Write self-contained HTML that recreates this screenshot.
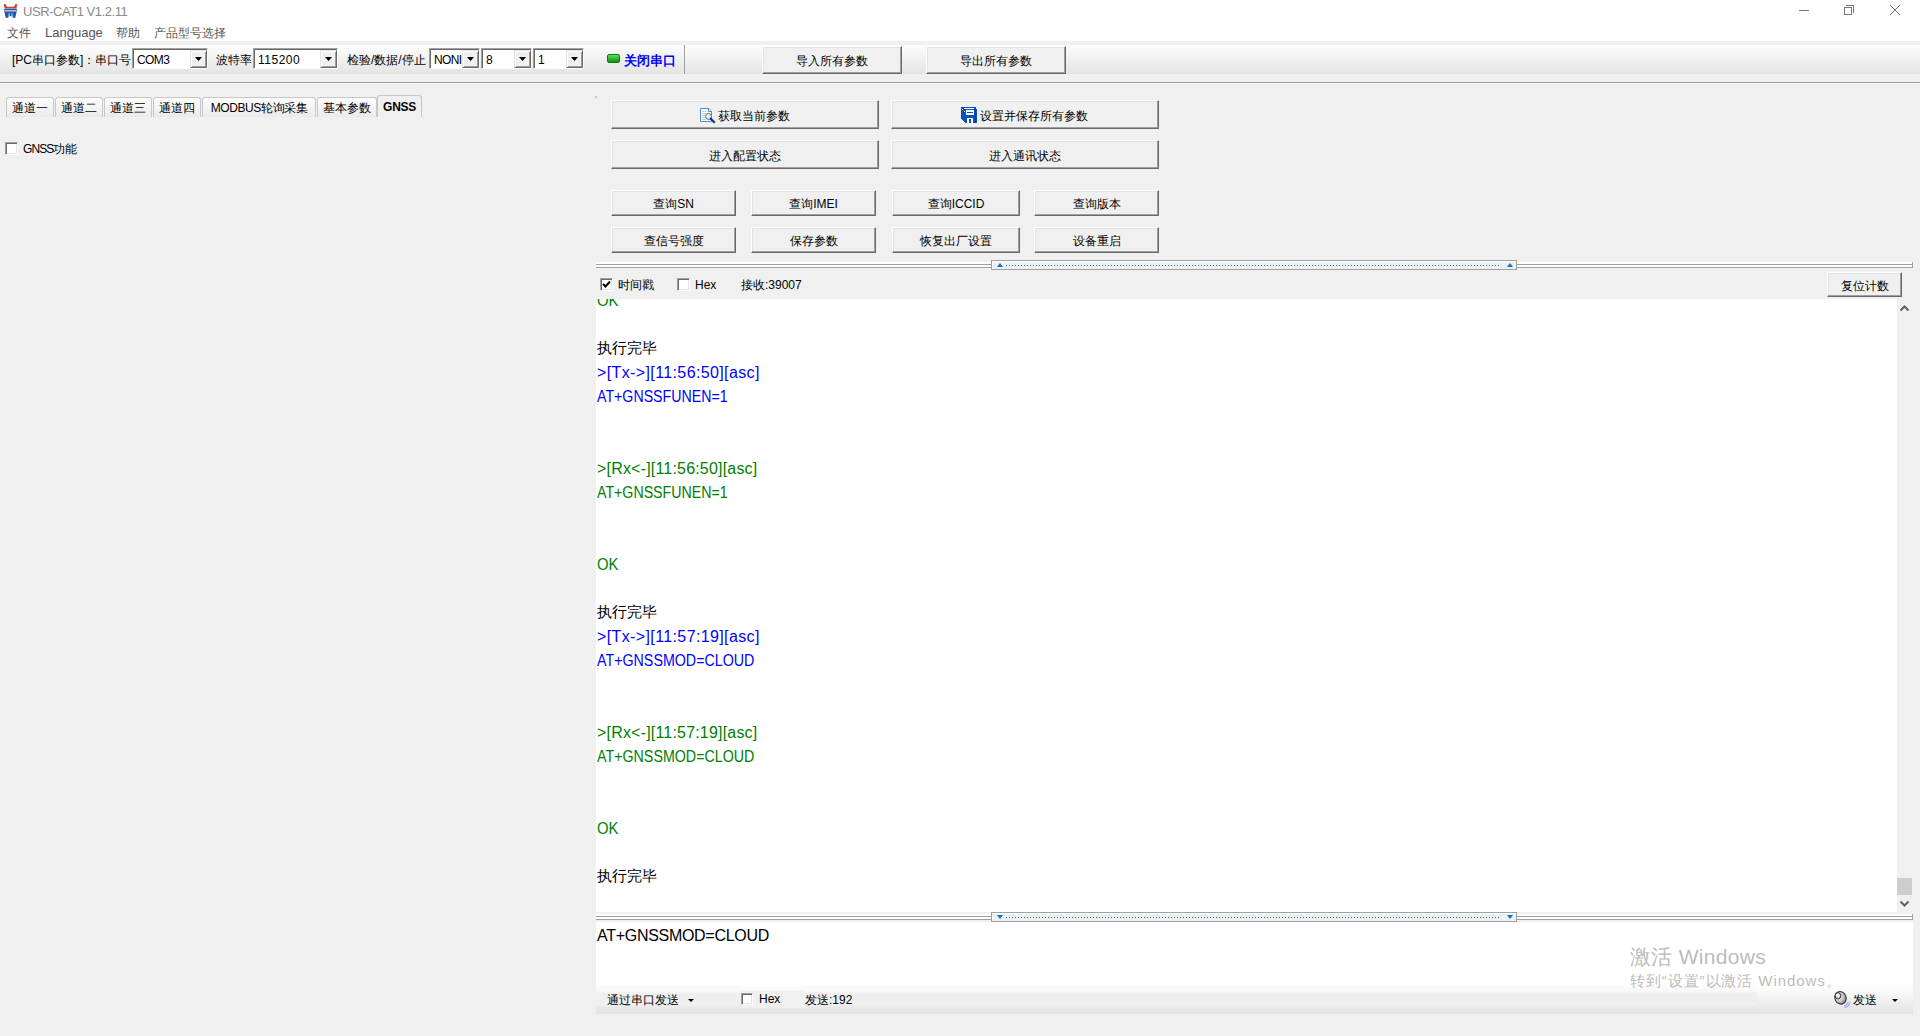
<!DOCTYPE html>
<html><head><meta charset="utf-8">
<style>
*{margin:0;padding:0;box-sizing:border-box}
html,body{width:1920px;height:1036px;overflow:hidden;background:#f0f0f0;font-family:"Liberation Sans",sans-serif;font-size:12px;color:#000}
.a{position:absolute}
.t{position:absolute;white-space:pre;line-height:14px;font-size:12px}
.btn{position:absolute;background:#f0f0f0;border-top:1px solid #fff;border-left:1px solid #fff;border-right:1px solid #696969;border-bottom:1px solid #696969;box-shadow:inset -1px -1px 0 #a0a0a0, inset 1px 1px 0 #e3e3e3}
.btn span{position:absolute;left:0;right:0;text-align:center;white-space:pre;line-height:14px}
.chk{position:absolute;width:13px;height:13px;background:#fff;border-top:1px solid #a0a0a0;border-left:1px solid #a0a0a0;border-right:1px solid #fff;border-bottom:1px solid #fff;box-shadow:inset 1px 1px 0 #696969, inset -1px -1px 0 #e3e3e3}
.combo{position:absolute;background:#fff;border-top:1px solid #a0a0a0;border-left:1px solid #a0a0a0;border-right:1px solid #fff;border-bottom:1px solid #fff;box-shadow:inset 1px 1px 0 #696969}
.combo .v{position:absolute;left:4px;top:4px;white-space:pre;line-height:14px;color:#000;letter-spacing:-0.6px}
.combo .dd{position:absolute;right:0;top:1px;bottom:0;width:17px;background:#f0f0f0;border-top:1px solid #e3e3e3;border-left:1px solid #e3e3e3;border-right:1px solid #696969;border-bottom:1px solid #696969;box-shadow:inset 1px 1px 0 #fff, inset -1px -1px 0 #a0a0a0}
.combo .dd:after{content:"";position:absolute;left:4px;top:6px;width:7px;height:4px;background:#000;clip-path:polygon(0 0,100% 0,50% 100%)}
.tab{position:absolute;top:97px;height:20px;border:1px solid #c8c8c8;border-bottom:none;border-radius:3px 3px 0 0;background:linear-gradient(#fdfdfd,#eaeaea)}
.tab span{position:absolute;left:0;right:0;top:3px;text-align:center;white-space:pre;line-height:14px}
.log{position:absolute;left:597px;white-space:pre;font-size:15px;line-height:24px}
.lat{font-size:16px}
.tx{color:#0000ff}.rx{color:#008000}
</style></head><body>

<!-- title bar -->
<div class="a" style="left:0;top:0;width:1920px;height:41px;background:#fff"></div>
<svg class="a" style="left:3px;top:3px" width="15" height="16" viewBox="0 0 15 16">
  <path d="M0.9 0.9 L2.7 0.9 Q2.9 3.2 4.5 3.7 L10.5 3.7 Q12.1 3.2 12.3 0.9 L14.1 0.9 Q14 4.5 13 5.6 L2 5.6 Q1 4.5 0.9 0.9 Z" fill="#d8402a"/>
  <path d="M1 5.7 L14 5.7 L13.6 9 L12.3 14.8 L9.6 14.8 L9.2 10 L8.7 10 L8.5 13.2 L6.5 13.2 L6.3 10 L5.8 10 L5.4 14.8 L2.7 14.8 L1.4 9 Z" fill="#2257b2"/>
  <rect x="1.6" y="7.2" width="11.8" height="1.3" fill="#c9d6ee"/>
</svg>
<div class="t" style="left:23px;top:4px;font-size:13px;line-height:15px;color:#8a8a8a;letter-spacing:-0.45px">USR-CAT1 V1.2.11</div>
<div class="t" style="left:7px;top:26px;color:#555">文件</div>
<div class="t" style="left:45px;top:26px;color:#555;font-size:13px">Language</div>
<div class="t" style="left:116px;top:26px;color:#555">帮助</div>
<div class="t" style="left:154px;top:26px;color:#555">产品型号选择</div>
<!-- window controls -->
<div class="a" style="left:1799px;top:10px;width:10px;height:1px;background:#777"></div>
<div class="a" style="left:1844px;top:7px;width:8px;height:8px;border:1px solid #777"></div>
<div class="a" style="left:1846px;top:5px;width:8px;height:8px;border-top:1px solid #777;border-right:1px solid #777"></div>
<svg class="a" style="left:1889px;top:4px" width="12" height="12"><path d="M1 1 L11 11 M11 1 L1 11" stroke="#777" stroke-width="1"/></svg>

<!-- toolbar -->
<div class="a" style="left:0;top:45px;width:1920px;height:29px;background:linear-gradient(#fdfdfd,#e4e4e4)"></div>
<div class="a" style="left:0;top:82px;width:1920px;height:1px;background:#a0a0a0"></div>
<div class="a" style="left:0;top:83px;width:1920px;height:1px;background:#fff"></div>
<div class="a" style="left:684px;top:45px;width:1px;height:29px;background:#a0a0a0"></div>

<div class="t" style="left:12px;top:53px">[PC串口参数]：串口号</div>
<div class="combo" style="left:132px;top:48px;width:76px;height:21px"><span class="v">COM3</span><div class="dd"></div></div>
<div class="t" style="left:216px;top:53px">波特率</div>
<div class="combo" style="left:253px;top:48px;width:85px;height:21px"><span class="v" style="letter-spacing:0.5px">115200</span><div class="dd"></div></div>
<div class="t" style="left:347px;top:53px">检验/数据/停止</div>
<div class="combo" style="left:429px;top:48px;width:51px;height:21px;overflow:hidden"><span class="v">NONI</span><div class="dd"></div></div>
<div class="combo" style="left:481px;top:48px;width:51px;height:21px"><span class="v">8</span><div class="dd"></div></div>
<div class="combo" style="left:533px;top:48px;width:51px;height:21px"><span class="v">1</span><div class="dd"></div></div>
<div class="a" style="left:607px;top:54px;width:13px;height:9px;border-radius:2px;background:linear-gradient(#5fe05f,#109010);border:1px solid #0a7a0a"></div>
<div class="t" style="left:624px;top:53px;color:#0000ff;font-weight:bold;font-size:13px;line-height:15px">关闭串口</div>

<div class="btn" style="left:762px;top:46px;width:140px;height:28px"><span style="top:7px">导入所有参数</span></div>
<div class="btn" style="left:926px;top:46px;width:140px;height:28px"><span style="top:7px">导出所有参数</span></div>

<!-- tabs -->
<div class="tab" style="left:6px;width:48px"><span>通道一</span></div>
<div class="tab" style="left:55px;width:48px"><span>通道二</span></div>
<div class="tab" style="left:104px;width:48px"><span>通道三</span></div>
<div class="tab" style="left:153px;width:48px"><span>通道四</span></div>
<div class="tab" style="left:202px;width:114px"><span style="letter-spacing:-0.4px">MODBUS轮询采集</span></div>
<div class="tab" style="left:317px;width:60px"><span>基本参数</span></div>
<div class="tab" style="left:377px;top:95px;width:45px;height:22px;background:#f0f0f0"><span style="top:4px;font-weight:bold;letter-spacing:-0.3px">GNSS</span></div>

<div class="chk" style="left:5px;top:142px"></div>
<div class="t" style="left:23px;top:142px"><span style="letter-spacing:-0.9px">GNSS</span>功能</div>

<!-- right panel buttons -->
<div class="a" style="left:595px;top:96px;width:2px;height:1px;background:#c4c4c4"></div>
<div class="a" style="left:595px;top:97px;width:1px;height:1px;background:#c8c8c8"></div>
<div class="a" style="left:596px;top:98px;width:2px;height:1px;background:#d6d6d6"></div>
<div class="btn" style="left:611px;top:100px;width:268px;height:29px"><span style="top:8px;padding-left:18px">获取当前参数</span></div>
<div class="btn" style="left:891px;top:100px;width:268px;height:29px"><span style="top:8px;padding-left:18px">设置并保存所有参数</span></div>
<div class="btn" style="left:611px;top:140px;width:268px;height:29px"><span style="top:8px">进入配置状态</span></div>
<div class="btn" style="left:891px;top:140px;width:268px;height:29px"><span style="top:8px">进入通讯状态</span></div>

<div class="btn" style="left:611px;top:190px;width:125px;height:26px"><span style="top:6px">查询SN</span></div>
<div class="btn" style="left:751px;top:190px;width:125px;height:26px"><span style="top:6px">查询IMEI</span></div>
<div class="btn" style="left:892px;top:190px;width:128px;height:26px"><span style="top:6px">查询ICCID</span></div>
<div class="btn" style="left:1034px;top:190px;width:125px;height:26px"><span style="top:6px">查询版本</span></div>
<div class="btn" style="left:611px;top:227px;width:125px;height:26px"><span style="top:6px">查信号强度</span></div>
<div class="btn" style="left:751px;top:227px;width:125px;height:26px"><span style="top:6px">保存参数</span></div>
<div class="btn" style="left:892px;top:227px;width:128px;height:26px"><span style="top:6px">恢复出厂设置</span></div>
<div class="btn" style="left:1034px;top:227px;width:125px;height:26px"><span style="top:6px">设备重启</span></div>

<!-- splitter 1 -->
<div class="a" style="left:596px;top:262px;width:1317px;height:6px;background:#fff;border-top:2px solid #fff"></div>
<div class="a" style="left:596px;top:264px;width:1317px;height:1px;background:#a0a0a0"></div>
<div class="a" style="left:596px;top:267px;width:1317px;height:1px;background:#a0a0a0"></div>
<div class="a" style="left:1912px;top:262px;width:1px;height:6px;background:#a0a0a0"></div>
<div class="a" style="left:991px;top:260px;width:526px;height:10px;background:#f0f0f0;border:1px solid #a0a0a0;box-shadow:inset 1px 1px 0 #fff"></div>
<div class="a" style="left:1006px;top:265px;width:494px;height:1px;background:repeating-linear-gradient(90deg,#0078d7 0 1px,transparent 1px 3px)"></div>
<div class="a" style="left:997px;top:263px;border-left:3px solid transparent;border-right:3px solid transparent;border-bottom:4px solid #0078d7"></div>
<div class="a" style="left:1507px;top:263px;border-left:3px solid transparent;border-right:3px solid transparent;border-bottom:4px solid #0078d7"></div>

<!-- receive bar -->
<div class="chk" style="left:600px;top:278px"></div>
<svg class="a" style="left:602px;top:280px" width="9" height="9"><path d="M1 4 L3.5 6.5 L8 1.5" stroke="#000" stroke-width="2" fill="none"/></svg>
<div class="t" style="left:618px;top:278px">时间戳</div>
<div class="chk" style="left:677px;top:278px"></div>
<div class="t" style="left:695px;top:278px">Hex</div>
<div class="t" style="left:741px;top:278px">接收:39007</div>
<div class="btn" style="left:1827px;top:272px;width:75px;height:25px"><span style="top:6px">复位计数</span></div>

<!-- log area -->
<div class="a" style="left:596px;top:299px;width:1301px;height:613px;background:#fff;overflow:hidden">
</div>
<div class="a" style="left:596px;top:299px;width:1301px;height:613px;overflow:hidden">
<div class="log rx lat" style="left:1px;top:-10px;transform:scaleX(0.93);transform-origin:0 0">OK</div>
<div class="log" style="left:1px;top:37px">执行完毕</div>
<div class="log tx lat" style="left:1px;top:62px;letter-spacing:0.38px">&gt;[Tx-&gt;][11:56:50][asc]</div>
<div class="log tx lat" style="left:1px;top:86px;transform:scaleX(0.887);transform-origin:0 0">AT+GNSSFUNEN=1</div>
<div class="log rx lat" style="left:1px;top:158px;letter-spacing:0.19px">&gt;[Rx&lt;-][11:56:50][asc]</div>
<div class="log rx lat" style="left:1px;top:182px;transform:scaleX(0.887);transform-origin:0 0">AT+GNSSFUNEN=1</div>
<div class="log rx lat" style="left:1px;top:254px;transform:scaleX(0.93);transform-origin:0 0">OK</div>
<div class="log" style="left:1px;top:301px">执行完毕</div>
<div class="log tx lat" style="left:1px;top:326px;letter-spacing:0.38px">&gt;[Tx-&gt;][11:57:19][asc]</div>
<div class="log tx lat" style="left:1px;top:350px;transform:scaleX(0.891);transform-origin:0 0">AT+GNSSMOD=CLOUD</div>
<div class="log rx lat" style="left:1px;top:422px;letter-spacing:0.19px">&gt;[Rx&lt;-][11:57:19][asc]</div>
<div class="log rx lat" style="left:1px;top:446px;transform:scaleX(0.891);transform-origin:0 0">AT+GNSSMOD=CLOUD</div>
<div class="log rx lat" style="left:1px;top:518px;transform:scaleX(0.93);transform-origin:0 0">OK</div>
<div class="log" style="left:1px;top:565px">执行完毕</div>
</div>
<!-- scrollbar -->
<svg class="a" style="left:1899px;top:303px" width="11" height="10"><path d="M1.5 7.5 L5.5 3.5 L9.5 7.5" stroke="#606060" stroke-width="2" fill="none"/></svg>
<div class="a" style="left:1897px;top:878px;width:15px;height:17px;background:#cdcdcd"></div>
<svg class="a" style="left:1899px;top:899px" width="11" height="10"><path d="M1.5 2.5 L5.5 6.5 L9.5 2.5" stroke="#606060" stroke-width="2" fill="none"/></svg>

<!-- splitter 2 -->
<div class="a" style="left:596px;top:914px;width:1317px;height:6px;background:#fff"></div>
<div class="a" style="left:596px;top:916px;width:1317px;height:1px;background:#a0a0a0"></div>
<div class="a" style="left:596px;top:919px;width:1317px;height:1px;background:#a0a0a0"></div>
<div class="a" style="left:1912px;top:914px;width:1px;height:6px;background:#a0a0a0"></div>
<div class="a" style="left:991px;top:912px;width:526px;height:10px;background:#f0f0f0;border:1px solid #a0a0a0;box-shadow:inset 1px 1px 0 #fff"></div>
<div class="a" style="left:1006px;top:917px;width:494px;height:1px;background:repeating-linear-gradient(90deg,#0078d7 0 1px,transparent 1px 3px)"></div>
<div class="a" style="left:997px;top:915px;border-left:3px solid transparent;border-right:3px solid transparent;border-top:4px solid #0078d7"></div>
<div class="a" style="left:1507px;top:915px;border-left:3px solid transparent;border-right:3px solid transparent;border-top:4px solid #0078d7"></div>

<!-- send area -->
<div class="a" style="left:596px;top:922px;width:1317px;height:92px;background:linear-gradient(#fff 0,#fff 63px,#fbfbfb 64px,#f8f8f8 70px,#efefef 71px,#efefef 83px,#e9e9e9 85px,#e6e6e6 88px,#e3e3e3 92px)"></div>
<div class="a" style="left:1757px;top:985px;width:156px;height:29px;background:linear-gradient(#fff,#f4f4f4 40%,#e3e3e3)"></div>
<div class="t" style="left:597px;top:927px;font-size:16px;line-height:18px;letter-spacing:-0.29px">AT+GNSSMOD=CLOUD</div>

<div class="a" style="left:1630px;top:945px;white-space:pre;font-size:21px;line-height:24px;color:#bcbcbc;letter-spacing:0.3px">激活 Windows</div>
<div class="a" style="left:1630px;top:972px;white-space:pre;font-size:15px;line-height:17px;color:#bcbcbc;letter-spacing:0.92px">转到“设置”以激活 Windows。</div>

<div class="t" style="left:607px;top:993px">通过串口发送</div>
<div class="a" style="left:688px;top:999px;border-left:3px solid transparent;border-right:3px solid transparent;border-top:3px solid #000"></div>
<div class="a" style="left:741px;top:991px;width:64px;height:17px;background:#f0f0f0"></div>
<div class="chk" style="left:741px;top:993px;width:12px;height:12px"></div>
<div class="t" style="left:759px;top:992px">Hex</div>
<div class="t" style="left:805px;top:993px">发送:192</div>

<svg class="a" style="left:1830px;top:988px" width="24" height="22" viewBox="0 0 24 22">
  <defs><radialGradient id="spk" cx="0.4" cy="0.35" r="0.75"><stop offset="0" stop-color="#fafafa"/><stop offset="0.55" stop-color="#c4c4c4"/><stop offset="1" stop-color="#6a6a6a"/></radialGradient></defs>
  <ellipse cx="10.5" cy="9.8" rx="5.6" ry="6.4" transform="rotate(-25 10.5 9.8)" fill="url(#spk)" stroke="#3c3c3c" stroke-width="1.1"/>
  <ellipse cx="8" cy="7.8" rx="2.8" ry="3.1" fill="#e0e0e0" stroke="#333" stroke-width="1"/>
  <circle cx="7.4" cy="7" r="1.1" fill="#fff"/>
  <path d="M6.2 4.6 L5.4 5.6 M4.7 7.6 L4.5 8.8" stroke="#5656c8" stroke-width="0.9"/>
  <path d="M14 17.8 Q17.2 17.2 18.6 13.6 M14.5 19.6 Q19 19 20.4 14.4" stroke="#8c8cff" stroke-width="1" fill="none"/>
</svg>
<div class="t" style="left:1853px;top:993px">发送</div>
<div class="a" style="left:1892px;top:999px;border-left:3px solid transparent;border-right:3px solid transparent;border-top:3px solid #000"></div>

<!-- icons on buttons -->
<svg class="a" style="left:700px;top:108px" width="16" height="16" viewBox="0 0 16 16">
  <path d="M0.5 0.5 H8.8 L11.5 3.2 V13.5 H0.5 Z" fill="#fff" stroke="#4f8fd0" stroke-width="1"/>
  <path d="M8.5 0.5 V3.5 H11.5" fill="none" stroke="#4f8fd0" stroke-width="1"/>
  <rect x="9" y="1.5" width="1.2" height="1.2" fill="#fff"/>
  <path d="M2 3.5 H7 M2 5.5 H6 M2 7.5 H5 M2 9.5 H5 M2 11.5 H6" stroke="#d2d2d2" stroke-width="1"/>
  <circle cx="8.5" cy="8.4" r="3" fill="#c8f6fa" stroke="#6a6a6a" stroke-width="1"/>
  <path d="M7.2 8.8 L8.6 7.2" stroke="#fff" stroke-width="0.9"/>
  <path d="M11 11 L14 14" stroke="#0a2a9c" stroke-width="2.1" stroke-linecap="square"/>
</svg>
<svg class="a" style="left:961px;top:107px" width="17" height="17" viewBox="0 0 17 17" shape-rendering="crispEdges">
  <path d="M0 0 H15 V2 H16 V16 H4 L0 12 Z" fill="#0b4fb8"/>
  <rect x="3" y="1" width="10" height="1" fill="#fff"/>
  <rect x="1" y="2" width="1" height="1" fill="#fff"/>
  <rect x="3" y="4" width="1" height="1" fill="#fff"/>
  <rect x="14" y="2" width="1" height="14" fill="#083a94"/>
  <rect x="5" y="3" width="8" height="5" fill="#fff"/>
  <rect x="6" y="5" width="6" height="1" fill="#0b4fb8"/>
  <rect x="6" y="6.5" width="6" height="0.6" fill="#3f74c8"/>
  <rect x="6" y="11" width="6" height="5" fill="#fff"/>
  <rect x="8" y="12" width="1.5" height="4" fill="#0b4fb8"/>
</svg>

</body></html>
